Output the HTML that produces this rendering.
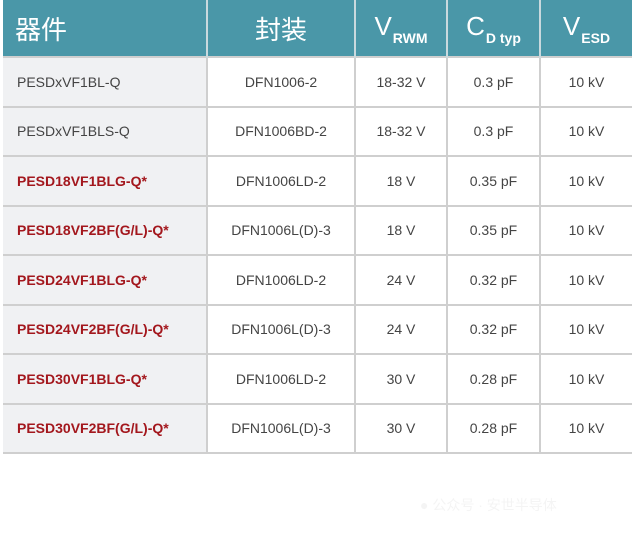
<!DOCTYPE html>
<html><head><meta charset="utf-8"><style>
body{margin:0;background:#fff;width:632px;height:539px;overflow:hidden;font-family:"Liberation Sans","Noto Sans CJK SC",sans-serif;}
table{position:absolute;left:3px;top:0;border-collapse:collapse;table-layout:fixed;width:629px;}
th{background:#4a97a8;color:#fff;height:56px;font-weight:normal;font-size:26px;border-left:2px solid #c9d9de;padding:0;}
th:first-child{border-left:none;text-align:left;padding-left:12px;}
th sub{font-size:14px;vertical-align:-8px;margin-left:1px;font-weight:bold}
td{height:47.5px;border-top:2px solid #cfcfcf;border-left:2px solid #cfcfcf;text-align:center;font-size:14px;color:#444;padding:0;}
td:first-child{border-left:none;text-align:left;padding-left:14px;background:#f0f1f3;}
tr:last-child td{border-bottom:2px solid #cfcfcf;}
.r{color:#a3171d;font-weight:bold;}
.wm{position:absolute;left:420px;top:495px;color:#f4f4f4;font-size:14px;}
</style></head><body>
<table>
<colgroup><col style="width:204px"><col style="width:148px"><col style="width:92px"><col style="width:93px"><col style="width:92px"></colgroup>
<tr><th>器件</th><th>封装</th><th>V<sub>RWM</sub></th><th>C<sub>D typ</sub></th><th>V<sub>ESD</sub></th></tr>
<tr><td>PESDxVF1BL-Q</td><td>DFN1006-2</td><td>18-32 V</td><td>0.3 pF</td><td>10 kV</td></tr>
<tr><td>PESDxVF1BLS-Q</td><td>DFN1006BD-2</td><td>18-32 V</td><td>0.3 pF</td><td>10 kV</td></tr>
<tr><td class="r">PESD18VF1BLG-Q*</td><td>DFN1006LD-2</td><td>18 V</td><td>0.35 pF</td><td>10 kV</td></tr>
<tr><td class="r">PESD18VF2BF(G/L)-Q*</td><td>DFN1006L(D)-3</td><td>18 V</td><td>0.35 pF</td><td>10 kV</td></tr>
<tr><td class="r">PESD24VF1BLG-Q*</td><td>DFN1006LD-2</td><td>24 V</td><td>0.32 pF</td><td>10 kV</td></tr>
<tr><td class="r">PESD24VF2BF(G/L)-Q*</td><td>DFN1006L(D)-3</td><td>24 V</td><td>0.32 pF</td><td>10 kV</td></tr>
<tr><td class="r">PESD30VF1BLG-Q*</td><td>DFN1006LD-2</td><td>30 V</td><td>0.28 pF</td><td>10 kV</td></tr>
<tr><td class="r">PESD30VF2BF(G/L)-Q*</td><td>DFN1006L(D)-3</td><td>30 V</td><td>0.28 pF</td><td>10 kV</td></tr>
</table>
<div class="wm">● 公众号 · 安世半导体</div>
</body></html>
